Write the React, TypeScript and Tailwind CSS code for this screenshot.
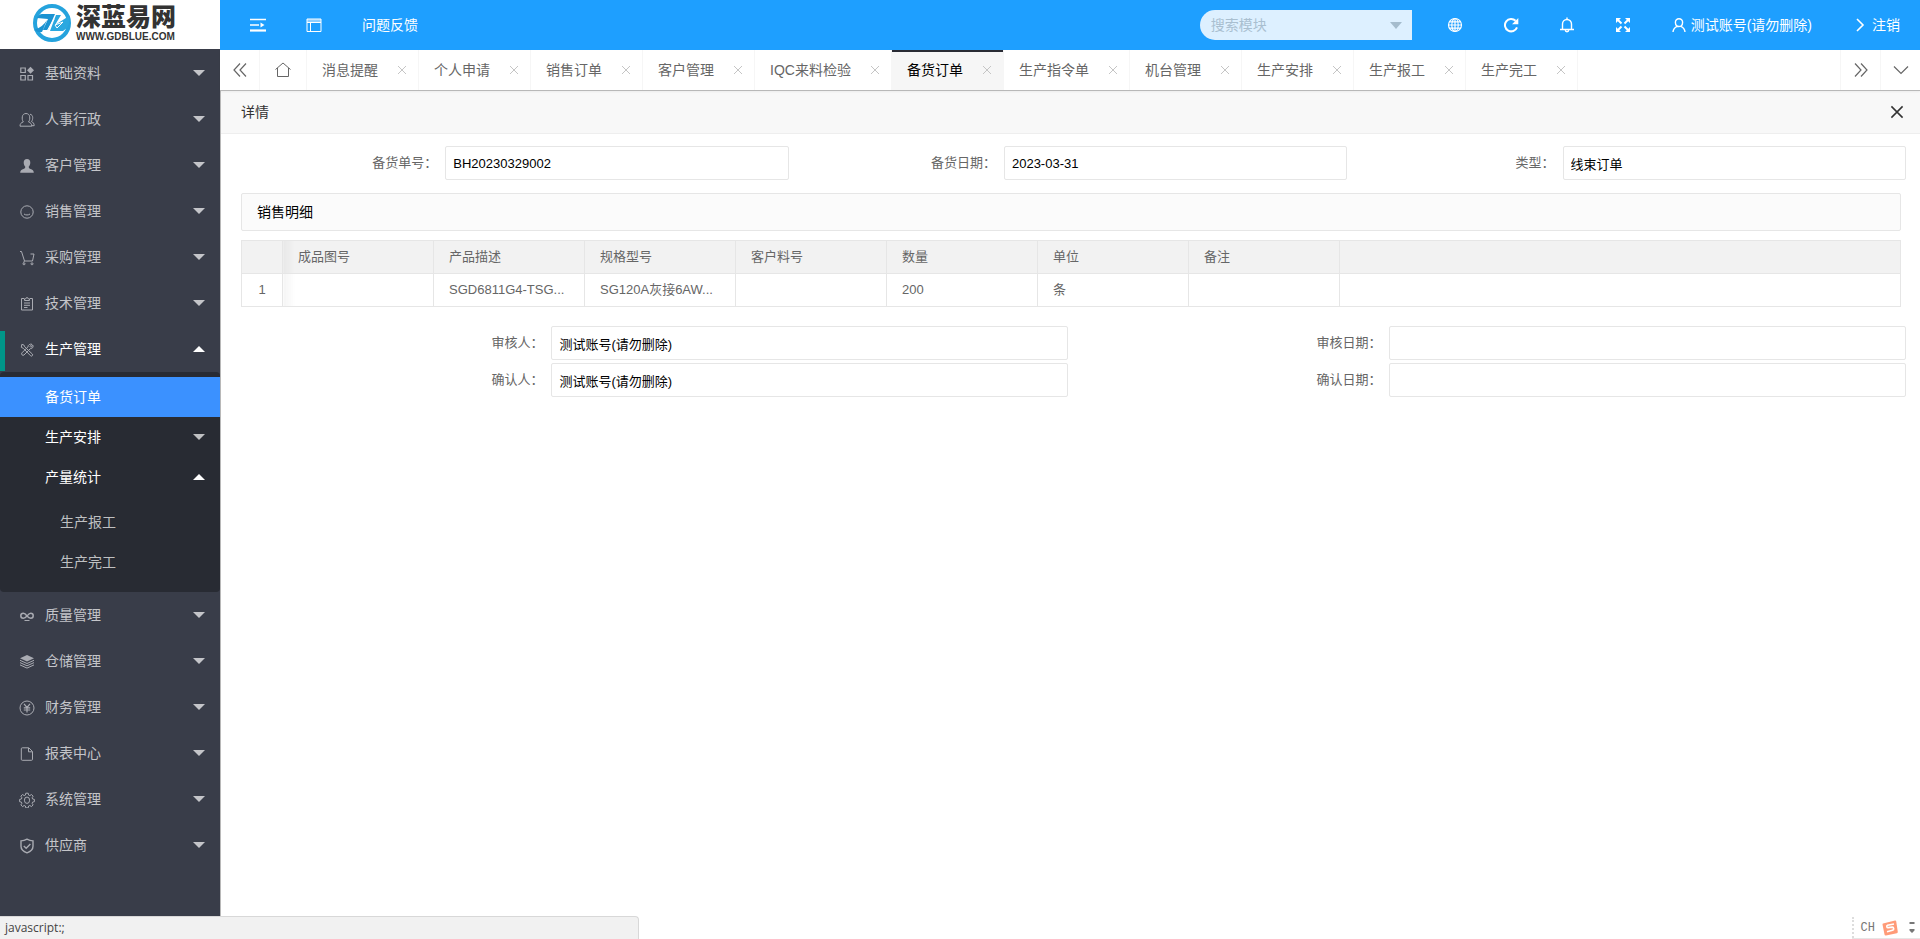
import { useState } from "react";
import type { ReactNode } from "react";

const stroke = { fill: "none", stroke: "currentColor", strokeWidth: 1 };

function Svg({ size = 16, children }: { size?: number; children: ReactNode }) {
  return (
    <svg width={size} height={size} viewBox="0 0 16 16" className="shrink-0" aria-hidden="true">
      {children}
    </svg>
  );
}

const icons: Record<string, ReactNode> = {
  app: (
    <g {...stroke} strokeWidth={1.2}>
      <path d="M1.800 2h4.500v4.500H1.800zM1.800 9.500h4.500V14H1.800zM9 9.500h4.500V14H9z" />
      <path d="M11.500 .8L15 4.300L11.500 7.800L8 4.300z" fill="currentColor" stroke="none" />
    </g>
  ),
  group: (
    <g {...stroke}>
      <path d="M1 14.200c0-2.400 1-3.500 3.300-4.300C3 8 3.200 6.500 3.300 4.800 3.500 2.800 5 1.500 7 1.500s3.500 1.300 3.700 3.300c.1 1.700.3 3.200-1.200 5.100 2.100.8 3.300 1.900 3.300 4.300z" />
      <path d="M11 2.200c1.800.4 2.700 1.700 2.700 3.300 0 1.500-.2 2.800-1.200 4 1.600.8 2.700 2 2.700 4.200h-2.400" />
    </g>
  ),
  user: (
    <path
      fill="currentColor"
      d="M8 1c2.200 0 3.400 1.600 3.300 3.700-.1 1.800-.7 3.100-1.600 4 .1 1.300.4 1.700 1.800 2.200 2 .7 3.200 1.200 3.300 3.800H1.200c.1-2.600 1.300-3.100 3.300-3.800 1.400-.5 1.700-.9 1.800-2.200-.9-.9-1.500-2.200-1.600-4C4.600 2.600 5.800 1 8 1z"
    />
  ),
  face: (
    <g {...stroke}>
      <circle cx="8" cy="8" r="6.200" />
      <path d="M5 10c1.500 1.300 4.500 1.300 6 0" />
    </g>
  ),
  cart: (
    <g {...stroke}>
      <path d="M1 1.500h1.500l3 9.500h8L15 4H11.500M5.500 11l-1 1.500" />
      <circle cx="5" cy="13.800" r="1" />
      <circle cx="13" cy="13.800" r="1" />
    </g>
  ),
  form: (
    <path
      {...stroke}
      d="M5 2.500H2.500v11.500h11V2.500H11M5.500 4.500h5V2.800H9.200a1.200 1.200 0 0 0-2.400 0H5.500zM5 7h6M5 9.300h6M5 11.500h3.500"
    />
  ),
  util: (
    <g {...stroke}>
      <path d="M2.800 2.400l2 .5 1 2L13.300 12a1.200 1.200 0 0 1-1.800 1.700L4.300 6.300l-2-1z" />
      <path d="M13 2.300l-2 2.100.9.900 2.100-2c.5 1.700-.6 3.600-2.700 3.400L5 13a1.500 1.500 0 0 1-2.100-2.100l6-6C8.900 3 11 1.600 13 2.300z" />
    </g>
  ),
  infinite: (
    <g {...stroke} strokeWidth={1.5}>
      <path d="M8 8C6.500 5.800 5.500 5.200 4.300 5.200a2.500 2.500 0 0 0 0 5C5.500 10.200 6.500 9.800 8 8s2.300-2.800 3.700-2.800a2.500 2.500 0 0 1 0 5C10.500 10.200 9.500 9.800 8 8z" />
      <path d="M5.500 12.500h5" strokeWidth={1} />
    </g>
  ),
  layers: (
    <g {...stroke}>
      <path d="M8 1l7 3.200-7 3.200-7-3.200z" fill="currentColor" stroke="none" />
      <path d="M1 6.300l7 3.200 7-3.200M1 8.600l7 3.200 7-3.200M1 10.900l7 3.200 7-3.200" />
    </g>
  ),
  yen: (
    <g {...stroke}>
      <circle cx="8" cy="8" r="7" />
      <path d="M5 3.800l3 3.700 3-3.700M8 7.500v5M4.800 7.800h6.400M4.800 10h6.400" strokeWidth={1.2} />
    </g>
  ),
  file: (
    <path {...stroke} d="M3.300 1.800h6.500l3.700 3.700v7.800q0 1-1 1H3.300q-1 0-1-1V2.800q0-1 1-1zM9.500 2v3.800h3.800" />
  ),
  gear: (
    <g {...stroke}>
      <path d="M6.800 1.200h2.400l.4 1.900 1.200.5 1.700-1.100 1.600 1.700-1 1.600.5 1.200 1.800.4v2.300l-1.800.4-.5 1.200 1 1.600-1.600 1.700-1.700-1.100-1.200.5-.4 1.900H6.800l-.4-1.900-1.200-.5-1.700 1.100-1.600-1.700 1-1.600-.5-1.200-1.800-.4V7.400L2.400 7l.5-1.200-1-1.600 1.600-1.700 1.700 1.100 1.200-.5z" />
      <ellipse cx="8" cy="8.200" rx="2.600" ry="3.200" />
    </g>
  ),
  shield: (
    <g {...stroke} strokeWidth={1.4}>
      <path d="M8 1.200c2 1.100 4 1.600 6 1.700v5.300c0 3-2.300 5.200-6 6.600-3.700-1.400-6-3.600-6-6.600V2.900c2-.1 4-.6 6-1.700z" />
      <path d="M4.800 8l2.400 2.300 4.200-4.200" />
    </g>
  ),
};

const topItems = [
  ["基础资料", "app"],
  ["人事行政", "group"],
  ["客户管理", "user"],
  ["销售管理", "face"],
  ["采购管理", "cart"],
  ["技术管理", "form"],
];

const bottomItems = [
  ["质量管理", "infinite"],
  ["仓储管理", "layers"],
  ["财务管理", "yen"],
  ["报表中心", "file"],
  ["系统管理", "gear"],
  ["供应商", "shield"],
];

const tabs = [
  "消息提醒",
  "个人申请",
  "销售订单",
  "客户管理",
  "IQC来料检验",
  "备货订单",
  "生产指令单",
  "机台管理",
  "生产安排",
  "生产报工",
  "生产完工",
];

function Caret({ up = false }: { up?: boolean }) {
  return (
    <svg width="12" height="6" viewBox="0 0 12 6" className="ml-auto shrink-0" aria-hidden="true">
      <path d={up ? "M0 6L6 0L12 6z" : "M0 0L6 6L12 0z"} fill="currentColor" />
    </svg>
  );
}

function NavItem({ label, icon, active = false }: { label: string; icon: string; active?: boolean }) {
  return (
    <li className="relative">
      {active && <span className="absolute left-0 top-[5px] h-10 w-[5px] bg-[#009688]" />}
      <a href="#" className={`flex h-[46px] items-center pl-[19px] pr-[15px] ${active ? "text-white" : "text-[#c4c5c9]"}`}>
        <span className="mt-0.5 text-[#a9abb2]">
          <Svg>{icons[icon]}</Svg>
        </span>
        <span className="ml-[10px]">{label}</span>
        <Caret up={active} />
      </a>
    </li>
  );
}

function Sidebar() {
  return (
    <aside className="flex w-[220px] shrink-0 flex-col bg-[#393d49]">
      <div className="flex h-[49px] items-center justify-center gap-[5px] bg-white pr-[11px]">
        <svg width="38" height="38" viewBox="0 0 38 38" className="-mt-1" aria-hidden="true">
          <circle cx="19" cy="19" r="17" fill="none" stroke="#25a3dd" strokeWidth="4" />
          <path d="M4 14q2-4 5-4h13l-7 16h-5l5-11zM1 26q9-3 13-10l-5 12H5z" fill="#1b93d2" />
          <path d="M23 11h5l-6 10 14-9q1 7-2 12l-4 3H17z" fill="#2aa8e0" />
          <path d="M14 27l7-12M22 21l8-3-6 6z" fill="none" stroke="#fff" strokeWidth="1" />
        </svg>
        <div className="-mt-1 flex flex-col text-[#333]">
          <span className="text-[25px] font-black leading-[27px]">深蓝易网</span>
          <span className="text-[10px] font-bold leading-[11px]">WWW.GDBLUE.COM</span>
        </div>
      </div>
      <nav className="mt-px">
        <ul>
          {topItems.map(([label, icon]) => (
            <NavItem key={label} label={label} icon={icon} />
          ))}
          <NavItem label="生产管理" icon="util" active />
        </ul>
        <ul className="rounded-sm bg-[#282b33] py-[5px] text-white">
          <li>
            <a href="#" className="flex h-10 items-center bg-[#3b91ff] pl-[45px]">备货订单</a>
          </li>
          <li>
            <a href="#" className="flex h-10 items-center pl-[45px] pr-[15px]">
              生产安排
              <span className="ml-auto text-[#bfc0c2]"><Caret /></span>
            </a>
          </li>
          <li>
            <a href="#" className="flex h-10 items-center pl-[45px] pr-[15px]">
              产量统计
              <Caret up />
            </a>
            <ul className="py-[5px] text-[#bfc0c2]">
              <li><a href="#" className="flex h-10 items-center pl-[60px]">生产报工</a></li>
              <li><a href="#" className="flex h-10 items-center pl-[60px]">生产完工</a></li>
            </ul>
          </li>
        </ul>
        <ul>
          {bottomItems.map(([label, icon]) => (
            <NavItem key={label} label={label} icon={icon} />
          ))}
        </ul>
      </nav>
    </aside>
  );
}

function Header() {
  return (
    <header className="flex h-[50px] items-center bg-[#1e9fff] text-white">
      <button className="flex h-full w-14 items-center justify-center pl-5" aria-label="侧边伸缩">
        <Svg>
          <path d="M0 2.500h16M0 8h9" stroke="currentColor" strokeWidth="1.600" />
          <path d="M0 13.500h16" stroke="currentColor" strokeWidth="2.200" />
          <path d="M10.500 5.500l4 2.500-4 2.500z" fill="currentColor" />
        </Svg>
      </button>
      <button className="flex h-full w-14 items-center justify-center pl-5" aria-label="前台">
        <Svg>
          <path {...stroke} d="M1 2h14v12.500H1zM1 5.500h14M4.500 5.500v9" />
          <path d="M1 2h14v3.500H1z" fill="currentColor" opacity=".5" />
        </Svg>
      </button>
      <a href="#" className="ml-[30px]">问题反馈</a>

      <label className="relative ml-auto block w-[212px]">
        <input
          type="text"
          aria-label="搜索模块"
          placeholder="搜索模块"
          className="h-[30px] w-full rounded-l-full rounded-r-xs bg-[#ddf0ff] pl-[11px] pr-8 text-gray-700 outline-none placeholder:text-[#a9bfd0]"
        />
        <svg width="12" height="7" viewBox="0 0 12 7" className="absolute right-[10px] top-3" aria-hidden="true">
          <path d="M0 0h12L6 7z" fill="#a5bccd" />
        </svg>
      </label>
      <div className="ml-[15px] flex h-full items-center">
        <button className="px-5" aria-label="网站">
          <Svg>
            <g {...stroke} strokeWidth={1.2}>
              <circle cx="8" cy="8" r="6.500" />
              <ellipse cx="8" cy="8" rx="3.200" ry="6.500" />
              <path d="M8 1.500v13M1.500 8h13M2.500 4.800h11M2.500 11.200h11" />
            </g>
          </Svg>
        </button>
        <button className="px-5" aria-label="刷新">
          <Svg>
            <path {...stroke} strokeWidth={2} d="M14 10.300A6.200 6.200 0 1 1 12.600 3.800" />
            <path d="M15.300 1v6.300H9z" fill="currentColor" />
          </Svg>
        </button>
        <button className="px-5" aria-label="消息">
          <Svg>
            <path {...stroke} strokeWidth={1.400} d="M3.500 12V7a4.500 4.500 0 0 1 9 0v5M1 12.500h14M8 .5v2M6.300 13a1.700 1.700 0 0 0 3.400 0" />
          </Svg>
        </button>
        <button className="px-5" aria-label="全屏">
          <Svg>
            <path d="M1 1h5L1 6zM15 1v5l-5-5zM1 15v-5l5 5zM15 15h-5l5-5z" fill="currentColor" />
            <path d="M2.500 2.500l4 4M13.500 2.500l-4 4M2.500 13.500l4-4M13.500 13.500l-4-4" stroke="currentColor" strokeWidth="2" />
          </Svg>
        </button>
        <button className="flex items-center gap-1 px-5">
          <Svg>
            <path {...stroke} strokeWidth={1.400} d="M8 1.700a3.600 3.600 0 0 1 3.600 3.800C11.500 7.700 10 9.500 8 9.500S4.500 7.700 4.400 5.500A3.600 3.600 0 0 1 8 1.700zM2 15c.2-3 2-4.800 4.300-5.700M14 15c-.2-3-2-4.800-4.300-5.700" />
          </Svg>
          测试账号(请勿删除)
        </button>
        <button className="flex items-center gap-1 px-5">
          <Svg>
            <path {...stroke} strokeWidth={1.600} d="M5 2l6 6-6 6" />
          </Svg>
          注销
        </button>
      </div>
    </header>
  );
}

function Cross({ size, width = 1 }: { size: number; width?: number }) {
  return (
    <svg width={size} height={size} viewBox="0 0 10 10" aria-hidden="true">
      <path d="M1 1l8 8M9 1l-8 8" stroke="currentColor" strokeWidth={width} fill="none" />
    </svg>
  );
}

function TabBar() {
  const [current, setCurrent] = useState("备货订单");
  return (
    <div className="relative z-10 flex h-[41px] border-b border-[#b8b8b8] bg-white text-[#666] shadow-xs">
      <button className="flex w-10 items-center justify-center border-r border-[#f6f6f6]" aria-label="向左">
        <Svg>
          <path {...stroke} strokeWidth={1.2} d="M8 1.500L2 8l6 6.500M14 1.500L8 8l6 6.500" />
        </Svg>
      </button>
      <button className="flex w-[47px] items-center justify-center border-r border-[#f6f6f6]" aria-label="主页">
        <Svg>
          <path {...stroke} d="M.5 7.500L8 1l7.500 6.500M2.500 6v8.500h11V6" />
        </Svg>
      </button>
      {tabs.map((tab) => (
        <div
          key={tab}
          className={`relative flex items-center border-r border-[#f6f6f6] pl-[15px] pr-[11px] ${tab === current ? "bg-[#f6f6f6] text-black" : ""}`}
        >
          {tab === current && <span className="absolute inset-x-0 top-0 h-0.5 bg-[#292b34]" />}
          <button onClick={() => setCurrent(tab)}>{tab}</button>
          <button className="ml-[19px] text-[#c5c5c5]" aria-label={`关闭${tab}`}>
            <Cross size={10} />
          </button>
        </div>
      ))}
      <button className="ml-auto flex w-10 items-center justify-center border-l border-[#f6f6f6]" aria-label="向右">
        <Svg>
          <path {...stroke} strokeWidth={1.2} d="M2 1.500L8 8l-6 6.500M8 1.500L14 8l-6 6.500" />
        </Svg>
      </button>
      <button className="flex w-10 items-center justify-center border-l border-[#f6f6f6]" aria-label="更多">
        <Svg>
          <path {...stroke} strokeWidth={1.2} d="M1 4.500l7 7 7-7" />
        </Svg>
      </button>
    </div>
  );
}

function Field({ id, label, value = "" }: { id: string; label: string; value?: string }) {
  return (
    <div className="flex items-center">
      <label htmlFor={id} className="w-[38%] pr-[5px] text-right text-[#666]">{label}：</label>
      <input
        id={id}
        type="text"
        defaultValue={value}
        className="ml-[3px] h-[34px] min-w-0 flex-1 rounded-xs border border-[#e6e6e6] bg-white px-[7px] text-black outline-none"
      />
    </div>
  );
}

const columns = ["成品图号", "产品描述", "规格型号", "客户料号", "数量", "单位", "备注"];
const row = ["", "SGD6811G4-TSG...", "SG120A灰接6AW...", "", "200", "条", ""];

// shade next to the fixed number column
const fixedShade = "bg-linear-to-r from-black/4 to-transparent to-8%";

function DetailTable() {
  return (
    <table className="mt-[9px] w-full table-fixed border-collapse border border-[#e6e6e6] text-left text-[13px] text-[#666]">
      <colgroup>
        <col className="w-[41px]" />
        {columns.map((c) => (
          <col key={c} className="w-[151px]" />
        ))}
        <col />
      </colgroup>
      <thead className="bg-[#f2f2f2]">
        <tr className="h-[33px]">
          <th className="border border-[#e6e6e6]" />
          {columns.map((c, i) => (
            <th key={c} className={`border border-[#e6e6e6] px-[15px] font-normal ${i === 0 ? fixedShade : ""}`}>{c}</th>
          ))}
          <th className="border border-[#e6e6e6]" />
        </tr>
      </thead>
      <tbody>
        <tr className="h-[33px]">
          <td className="border border-[#e6e6e6] text-center">1</td>
          {row.map((cell, i) => (
            <td key={columns[i]} className={`whitespace-nowrap border border-[#e6e6e6] px-[15px] ${i === 0 ? fixedShade : ""}`}>{cell}</td>
          ))}
          <td className="border border-[#e6e6e6]" />
        </tr>
      </tbody>
    </table>
  );
}

export default function App() {
  return (
    <div className="relative flex min-h-screen bg-white font-['Liberation_Sans','Noto_Sans_CJK_SC',sans-serif] text-sm">
      <Sidebar />
      <div className="flex min-w-0 flex-1 flex-col">
        <Header />
        <TabBar />
        <main className="flex-1 border-l border-[#b8b8b8]">
          <div className="flex h-[43px] items-center justify-between border-b border-[#eee] bg-[#f8f8f8] pl-5 pr-4 text-[#333]">
            <h1>详情</h1>
            <button aria-label="关闭">
              <Cross size={14} width={1.1} />
            </button>
          </div>
          <form className="pb-8 pl-[9px] pr-[14px] pt-3 text-[13px]">
            <div className="grid grid-cols-3">
              <Field id="orderNo" label="备货单号" value="BH20230329002" />
              <Field id="orderDate" label="备货日期" value="2023-03-31" />
              <Field id="orderType" label="类型" value="线束订单" />
            </div>
            <div className="ml-[11px] mr-[5px]">
              <h2 className="mt-[13px] flex h-[38px] items-center rounded-xs border border-[#e6e6e6] bg-[#fbfbfb] px-[15px] text-sm text-black">
                销售明细
              </h2>
              <DetailTable />
            </div>
            <div className="mt-[19px] grid grid-cols-2 gap-y-[3px]">
              <Field id="auditor" label="审核人" value="测试账号(请勿删除)" />
              <Field id="auditDate" label="审核日期" />
              <Field id="confirmer" label="确认人" value="测试账号(请勿删除)" />
              <Field id="confirmDate" label="确认日期" />
            </div>
          </form>
        </main>
      </div>

      {/* browser status bubble */}
      <div className="absolute bottom-0 left-0 flex h-[23px] w-[639px] items-center rounded-tr border-r border-t border-[#d8d8d8] bg-[#f1f1f1] pl-[5px] font-['Open_Sans',sans-serif] text-xs text-[#444]">
        javascript:;
      </div>

      {/* input method bar */}
      <div className="absolute bottom-0 right-0 flex h-[22px] items-center border-b border-[#e6e6e6] bg-white pr-[5px]">
        <span className="h-full border-l-2 border-dotted border-[#ddd]" />
        <span className="ml-[7px] font-['Liberation_Mono',monospace] text-xs text-[#777]">CH</span>
        <svg width="16" height="16" viewBox="0 0 16 16" className="ml-[7px]" aria-hidden="true">
          <path d="M1 3.500L13 .5q1-.2 1.200.8L15.800 12q0 1-1 1.300L4 15.500q-1.300.2-1.500-1L.5 4.500q0-.8.500-1z" fill="#ff9b78" />
          <path d="M12 4L5.500 5.200q-1 .4-.7 1.500t1.500.9l4-.5q1.200 0 1.400 1.400t-1.200 1.800L5 11.800" fill="none" stroke="#fff" strokeWidth="1.600" />
        </svg>
        <svg width="6" height="11" viewBox="0 0 6 11" className="ml-[11px]" aria-hidden="true">
          <path d="M.5 0h5v2h-5zM.5 7h5v1.500L3 11 .5 8.500z" fill="#777" />
        </svg>
      </div>
    </div>
  );
}
